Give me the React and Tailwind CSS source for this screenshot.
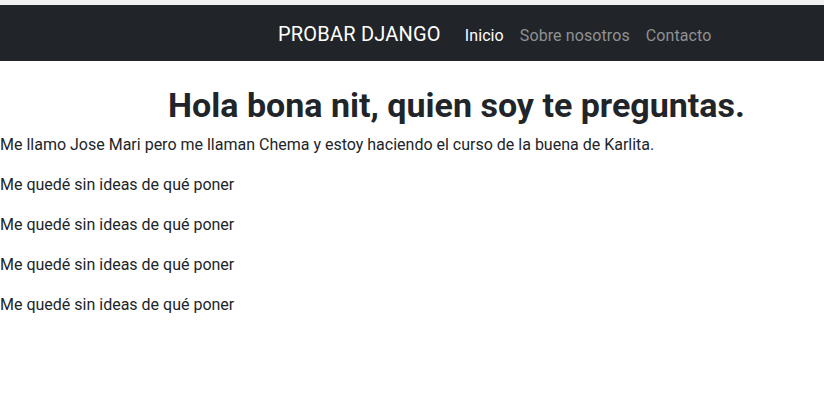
const navLinks = [
  { label: 'Inicio', active: true },
  { label: 'Sobre nosotros', active: false },
  { label: 'Contacto', active: false },
]

const extraLines = [
  'Me quedé sin ideas de qué poner',
  'Me quedé sin ideas de qué poner',
  'Me quedé sin ideas de qué poner',
  'Me quedé sin ideas de qué poner',
]

export default function App() {
  return (
    <div className="min-h-[402px] bg-white font-['Roboto',sans-serif] text-[#212529]">
      <div className="h-[5px] bg-[#f0f0f0]" />
      <nav className="flex h-[56px] items-center bg-[#212529]">
        <div className="ml-[278px] flex items-baseline pt-[2px]">
          <a className="mr-[16px] text-[20px] leading-[30px] tracking-[0.2px] text-white" href="#">
            PROBAR DJANGO
          </a>
          <ul className="flex items-baseline">
            {navLinks.map((link) => (
              <li key={link.label}>
                <a
                  className={`px-[8px] text-[16px] leading-6 tracking-[0.1px] ${link.active ? 'text-white' : 'text-[#8f9193]'}`}
                  href="#"
                >
                  {link.label}
                </a>
              </li>
            ))}
          </ul>
        </div>
      </nav>

      <main className="pt-[24px]">
        <h1 className="mb-[7px] pl-[89px] text-center text-[34px] font-bold leading-[1.2]">
          Hola bona nit, quien soy te preguntas.
        </h1>
        <p className="mb-4 text-[16px] leading-6">
          Me llamo Jose Mari pero me llaman Chema y estoy haciendo el curso de la buena de Karlita.
        </p>
        {extraLines.map((line, i) => (
          <p key={i} className="mb-4 text-[16px] leading-6">
            {line}
          </p>
        ))}
      </main>
    </div>
  )
}
